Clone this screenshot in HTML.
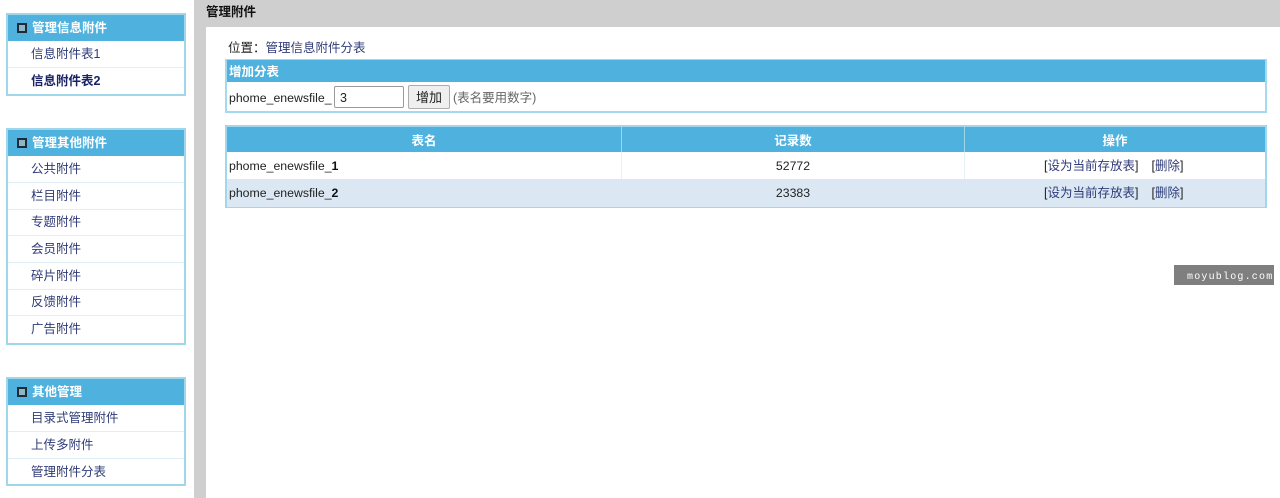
<!DOCTYPE html>
<html><head><meta charset="utf-8"><style>
html,body{margin:0;padding:0;background:#fff;}
body{width:1280px;height:498px;position:relative;overflow:hidden;font-family:"Liberation Sans","Noto Sans CJK SC",sans-serif;font-size:12.5px;color:#222;}
div{position:absolute;box-sizing:border-box;white-space:nowrap;}
.panel{left:6px;width:180px;border:2px solid #a0d6ea;background:#fff;}
.h{left:0;top:0;width:176px;height:26px;background:#4fb2de;color:#fff;font-weight:bold;line-height:27px;padding-left:24px;}
.ic{left:9px;top:8px;width:10px;height:10px;background:#8fb4c4;border:2px solid #1c2b38;}
.r{left:0;width:176px;height:27px;line-height:27px;padding-left:23px;color:#2f3b78;border-bottom:1px solid #dff0f7;}
.r:last-child{border-bottom:0;}
.a{color:#2f3b78;}
.l{font-size:12.3px;}
.cell{line-height:26px;height:27px;}
.th{top:0;height:25px;background:#4fb2de;color:#fff;font-weight:bold;line-height:28px;text-align:center;}
</style></head><body>
<div class="panel" style="top:13px;height:83px"><div class="h"><div class="ic"></div>管理信息附件</div>
<div class="r" style="top:26px">信息附件表1</div><div class="r" style="top:53px;color:#1a2366;font-weight:bold">信息附件表2</div></div>
<div class="panel" style="top:128px;height:217px"><div class="h"><div class="ic"></div>管理其他附件</div>
<div class="r" style="top:26px">公共附件</div><div class="r" style="top:53px">栏目附件</div><div class="r" style="top:79px">专题附件</div><div class="r" style="top:106px">会员附件</div><div class="r" style="top:133px">碎片附件</div><div class="r" style="top:159px">反馈附件</div><div class="r" style="top:186px">广告附件</div></div>
<div class="panel" style="top:377px;height:109px"><div class="h"><div class="ic"></div>其他管理</div>
<div class="r" style="top:26px">目录式管理附件</div><div class="r" style="top:53px">上传多附件</div><div class="r" style="top:80px">管理附件分表</div></div>
<div style="left:194px;top:0;width:12px;height:498px;background:#cfcfcf"></div>
<div style="left:194px;top:0;width:1086px;height:27px;background:#cfcfcf"></div>
<div style="left:206px;top:0;height:24px;line-height:24px;font-weight:bold;color:#111">管理附件</div>
<div style="left:228px;top:39px;line-height:18px;color:#222">位置：<span class="a">管理信息附件分表</span></div>
<div style="left:225px;top:59px;width:1042px;height:54px;border:2px solid #a5d9ee;border-top-width:1px;background:#fff">
<div style="left:0;top:0;width:1038px;height:22px;background:#4fb2de;color:#fff;font-weight:bold;line-height:24px;padding-left:2px">增加分表</div>
<div class="l" style="left:2px;top:25px;line-height:26px;color:#222">phome_enewsfile_</div>
<div style="left:107px;top:26px;width:70px;height:22px;border:1px solid #9a9a9a;border-radius:2px;background:#fff;line-height:22px;padding-left:5px;font-size:12.5px;color:#222">3</div>
<div style="left:181px;top:25px;width:42px;height:24px;border:1px solid #adadad;border-radius:2px;background:#efefef;line-height:24px;text-align:center;color:#222;font-size:13px">增加</div>
<div style="left:226px;top:25px;line-height:26px;color:#666">(表名要用数字)</div>
</div>
<div style="left:225px;top:125px;width:1042px;height:83px;border:2px solid #9fd7ee;border-bottom-width:1px;background:#fff">
<div class="th" style="left:0;width:394px">表名</div>
<div class="th" style="left:395px;width:342px">记录数</div>
<div class="th" style="left:738px;width:300px">操作</div>
<div style="left:394px;top:0;width:1px;height:25px;background:#a0d6ea"></div>
<div style="left:737px;top:0;width:1px;height:25px;background:#a0d6ea"></div>
<div style="left:394px;top:25px;width:1px;height:27px;background:#e4f2f8"></div>
<div style="left:737px;top:25px;width:1px;height:27px;background:#e4f2f8"></div>
<div style="left:0;top:52px;width:1038px;height:28px;background:#dbe8f3"></div>
<div class="cell l" style="left:2px;top:26px">phome_enewsfile_<b style="color:#111">1</b></div>
<div class="cell l" style="left:2px;top:53px">phome_enewsfile_<b style="color:#111">2</b></div>
<div class="cell l" style="left:395px;top:26px;width:342px;text-align:center">52772</div>
<div class="cell l" style="left:395px;top:53px;width:342px;text-align:center">23383</div>
<div class="cell" style="left:817px;top:26px">[<span class="a">设为当前存放表</span>]<span style="display:inline-block;width:13px"></span>[<span class="a">删除</span>]</div>
<div class="cell" style="left:817px;top:53px">[<span class="a">设为当前存放表</span>]<span style="display:inline-block;width:13px"></span>[<span class="a">删除</span>]</div>
</div>
<div style="left:1174px;top:265px;width:100px;height:20px;background:#7f7f7f;color:#fff;font-family:'Liberation Mono','DejaVu Sans Mono',monospace;font-size:10px;line-height:25px;padding-left:13px;letter-spacing:1.2px">moyublog.com</div>
</body></html>
